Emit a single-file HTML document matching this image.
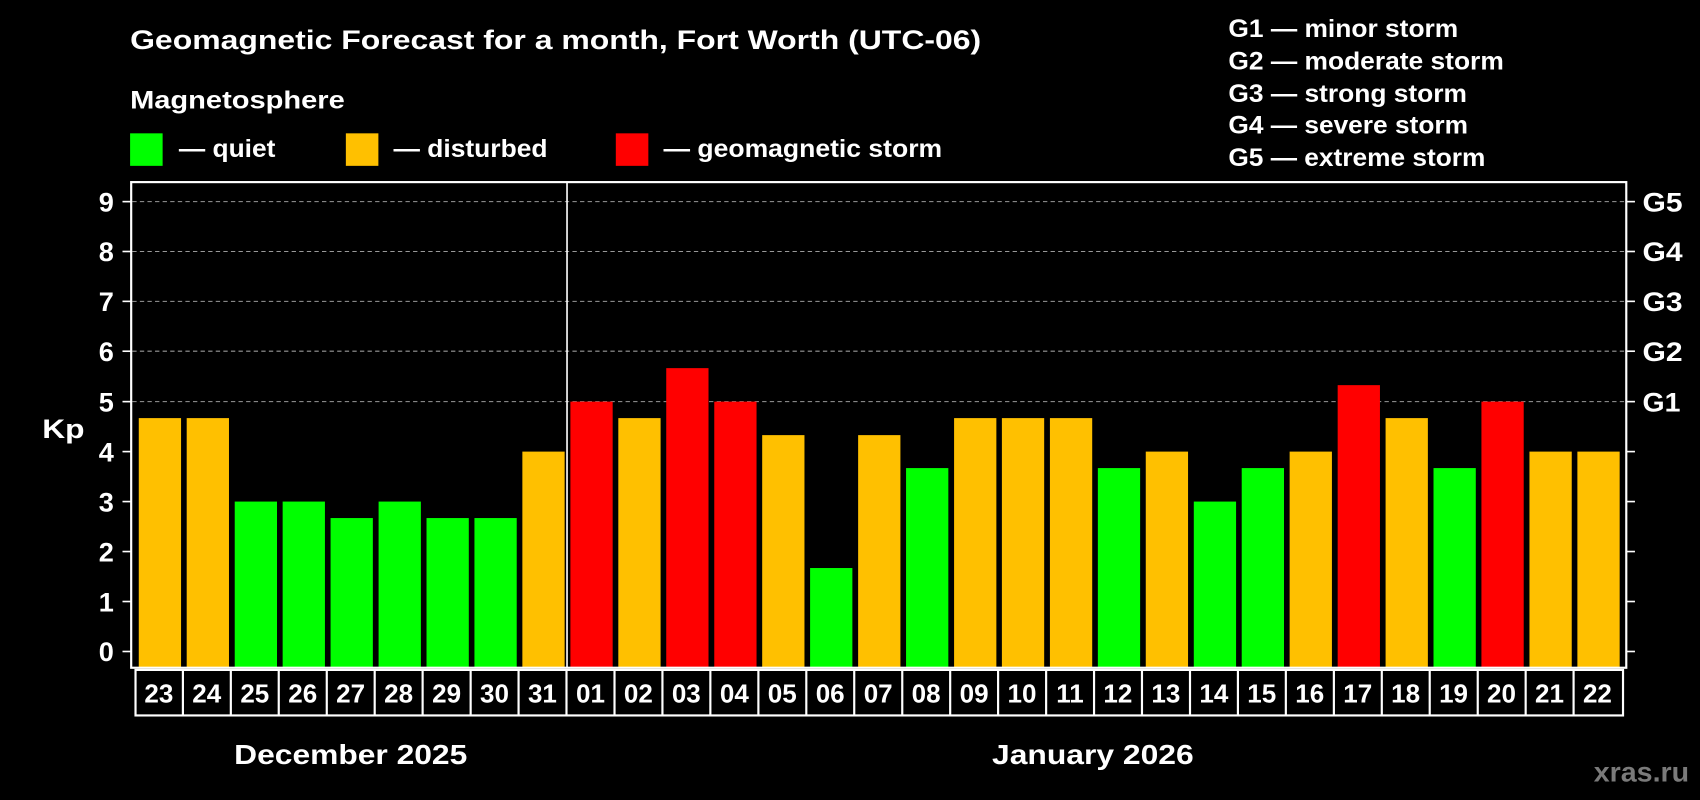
<!DOCTYPE html>
<html><head><meta charset="utf-8"><style>
html,body{margin:0;padding:0;background:#000;width:1700px;height:800px;overflow:hidden}
svg{display:block}
text{font-family:"Liberation Sans",Arial,sans-serif;font-weight:bold;fill:#fff}
</style></head><body>
<svg width="1700" height="800" viewBox="0 0 1568 738" preserveAspectRatio="none" xmlns="http://www.w3.org/2000/svg">
<rect width="1568" height="738" fill="#000"/>
<text x="120" y="45" font-size="25" textLength="785" lengthAdjust="spacingAndGlyphs">Geomagnetic Forecast for a month, Fort Worth (UTC-06)</text>
<text x="120" y="100" font-size="23" textLength="198" lengthAdjust="spacingAndGlyphs">Magnetosphere</text>
<rect x="120" y="123" width="30" height="30" fill="#00ff00"/>
<text x="165" y="145" font-size="23" textLength="89" lengthAdjust="spacingAndGlyphs">— quiet</text>
<rect x="319" y="123" width="30" height="30" fill="#ffc000"/>
<text x="363" y="145" font-size="23" textLength="142" lengthAdjust="spacingAndGlyphs">— disturbed</text>
<rect x="568" y="123" width="30" height="30" fill="#ff0000"/>
<text x="612" y="145" font-size="23" textLength="257" lengthAdjust="spacingAndGlyphs">— geomagnetic storm</text>
<g font-size="23">
<text x="1133" y="34" textLength="212" lengthAdjust="spacingAndGlyphs">G1 — minor storm</text>
<text x="1133" y="64" textLength="254" lengthAdjust="spacingAndGlyphs">G2 — moderate storm</text>
<text x="1133" y="94" textLength="220" lengthAdjust="spacingAndGlyphs">G3 — strong storm</text>
<text x="1133" y="123" textLength="221" lengthAdjust="spacingAndGlyphs">G4 — severe storm</text>
<text x="1133" y="153" textLength="237" lengthAdjust="spacingAndGlyphs">G5 — extreme storm</text>
</g>
<g stroke="#999" stroke-width="1" stroke-dasharray="4,3">
<line x1="122" x2="1500" y1="186" y2="186"/>
<line x1="122" x2="1500" y1="232" y2="232"/>
<line x1="122" x2="1500" y1="278" y2="278"/>
<line x1="122" x2="1500" y1="324" y2="324"/>
<line x1="122" x2="1500" y1="370.5" y2="370.5"/>
</g>
<g>
<rect x="128.0" y="385.7" width="39" height="230.3" fill="#ffc000"/>
<rect x="172.2" y="385.7" width="39" height="230.3" fill="#ffc000"/>
<rect x="216.5" y="462.7" width="39" height="153.3" fill="#00ff00"/>
<rect x="260.7" y="462.7" width="39" height="153.3" fill="#00ff00"/>
<rect x="304.9" y="477.9" width="39" height="138.1" fill="#00ff00"/>
<rect x="349.2" y="462.7" width="39" height="153.3" fill="#00ff00"/>
<rect x="393.4" y="477.9" width="39" height="138.1" fill="#00ff00"/>
<rect x="437.6" y="477.9" width="39" height="138.1" fill="#00ff00"/>
<rect x="481.8" y="416.6" width="39" height="199.4" fill="#ffc000"/>
<rect x="526.1" y="370.5" width="39" height="245.5" fill="#ff0000"/>
<rect x="570.3" y="385.7" width="39" height="230.3" fill="#ffc000"/>
<rect x="614.5" y="339.6" width="39" height="276.4" fill="#ff0000"/>
<rect x="658.8" y="370.5" width="39" height="245.5" fill="#ff0000"/>
<rect x="703.0" y="401.4" width="39" height="214.6" fill="#ffc000"/>
<rect x="747.2" y="524.0" width="39" height="92.0" fill="#00ff00"/>
<rect x="791.5" y="401.4" width="39" height="214.6" fill="#ffc000"/>
<rect x="835.7" y="431.8" width="39" height="184.2" fill="#00ff00"/>
<rect x="880.0" y="385.7" width="39" height="230.3" fill="#ffc000"/>
<rect x="924.1" y="385.7" width="39" height="230.3" fill="#ffc000"/>
<rect x="968.4" y="385.7" width="39" height="230.3" fill="#ffc000"/>
<rect x="1012.6" y="431.8" width="39" height="184.2" fill="#00ff00"/>
<rect x="1056.8" y="416.6" width="39" height="199.4" fill="#ffc000"/>
<rect x="1101.1" y="462.7" width="39" height="153.3" fill="#00ff00"/>
<rect x="1145.3" y="431.8" width="39" height="184.2" fill="#00ff00"/>
<rect x="1189.5" y="416.6" width="39" height="199.4" fill="#ffc000"/>
<rect x="1233.8" y="355.3" width="39" height="260.7" fill="#ff0000"/>
<rect x="1278.0" y="385.7" width="39" height="230.3" fill="#ffc000"/>
<rect x="1322.2" y="431.8" width="39" height="184.2" fill="#00ff00"/>
<rect x="1366.4" y="370.5" width="39" height="245.5" fill="#ff0000"/>
<rect x="1410.7" y="416.6" width="39" height="199.4" fill="#ffc000"/>
<rect x="1454.9" y="416.6" width="39" height="199.4" fill="#ffc000"/>
</g>
<rect x="121" y="168" width="1379" height="448" fill="none" stroke="#fff" stroke-width="2"/>
<line x1="523" x2="523" y1="168" y2="616" stroke="#fff" stroke-width="1.5"/>
<g stroke="#fff" stroke-width="1.5">
<line x1="113" x2="121" y1="186" y2="186"/><line x1="113" x2="121" y1="232" y2="232"/><line x1="113" x2="121" y1="278" y2="278"/><line x1="113" x2="121" y1="324" y2="324"/><line x1="113" x2="121" y1="370.5" y2="370.5"/><line x1="113" x2="121" y1="416.6" y2="416.6"/><line x1="113" x2="121" y1="462.7" y2="462.7"/><line x1="113" x2="121" y1="508.8" y2="508.8"/><line x1="113" x2="121" y1="554.9" y2="554.9"/><line x1="113" x2="121" y1="601" y2="601"/>
<line x1="1500" x2="1508" y1="186" y2="186"/><line x1="1500" x2="1508" y1="232" y2="232"/><line x1="1500" x2="1508" y1="278" y2="278"/><line x1="1500" x2="1508" y1="324" y2="324"/><line x1="1500" x2="1508" y1="370.5" y2="370.5"/><line x1="1500" x2="1508" y1="416.6" y2="416.6"/><line x1="1500" x2="1508" y1="462.7" y2="462.7"/><line x1="1500" x2="1508" y1="508.8" y2="508.8"/><line x1="1500" x2="1508" y1="554.9" y2="554.9"/><line x1="1500" x2="1508" y1="601" y2="601"/>
</g>
<g font-size="25" text-anchor="end">
<text x="105" y="195">9</text><text x="105" y="241">8</text><text x="105" y="287">7</text><text x="105" y="333">6</text><text x="105" y="379.5">5</text><text x="105" y="425.6">4</text><text x="105" y="471.7">3</text><text x="105" y="517.8">2</text><text x="105" y="563.9">1</text><text x="105" y="610">0</text>
</g>
<text x="39" y="404" font-size="25" textLength="39" lengthAdjust="spacingAndGlyphs">Kp</text>
<g font-size="25">
<text x="1515" y="195" textLength="37" lengthAdjust="spacingAndGlyphs">G5</text><text x="1515" y="241" textLength="37" lengthAdjust="spacingAndGlyphs">G4</text><text x="1515" y="287" textLength="37" lengthAdjust="spacingAndGlyphs">G3</text><text x="1515" y="333" textLength="37" lengthAdjust="spacingAndGlyphs">G2</text><text x="1515" y="379.5" textLength="35" lengthAdjust="spacingAndGlyphs">G1</text>
</g>
<g stroke="#fff" stroke-width="2" fill="none">
<rect x="125" y="618" width="1372" height="42"/>
<path d="M168.7 618V660M212.9 618V660M257.1 618V660M301.4 618V660M345.6 618V660M389.8 618V660M434.1 618V660M478.3 618V660M522.5 618V660M566.8 618V660M611 618V660M655.2 618V660M699.5 618V660M743.7 618V660M787.9 618V660M832.2 618V660M876.4 618V660M920.6 618V660M964.9 618V660M1009.1 618V660M1053.3 618V660M1097.6 618V660M1141.8 618V660M1186 618V660M1230.3 618V660M1274.5 618V660M1318.7 618V660M1363 618V660M1407.2 618V660M1451.4 618V660"/>
</g>
<g font-size="24" text-anchor="middle">
<text x="146.5" y="648">23</text><text x="190.7" y="648">24</text><text x="235" y="648">25</text><text x="279.2" y="648">26</text><text x="323.4" y="648">27</text><text x="367.7" y="648">28</text><text x="411.9" y="648">29</text><text x="456.1" y="648">30</text><text x="500.3" y="648">31</text><text x="544.6" y="648">01</text><text x="588.8" y="648">02</text><text x="633" y="648">03</text><text x="677.3" y="648">04</text><text x="721.5" y="648">05</text><text x="765.7" y="648">06</text><text x="810" y="648">07</text><text x="854.2" y="648">08</text><text x="898.5" y="648">09</text><text x="942.6" y="648">10</text><text x="986.9" y="648">11</text><text x="1031.1" y="648">12</text><text x="1075.3" y="648">13</text><text x="1119.6" y="648">14</text><text x="1163.8" y="648">15</text><text x="1208" y="648">16</text><text x="1252.3" y="648">17</text><text x="1296.5" y="648">18</text><text x="1340.7" y="648">19</text><text x="1384.9" y="648">20</text><text x="1429.2" y="648">21</text><text x="1473.4" y="648">22</text>
</g>
<text x="216" y="705" font-size="26" textLength="215" lengthAdjust="spacingAndGlyphs">December 2025</text>
<text x="915" y="705" font-size="26" textLength="186" lengthAdjust="spacingAndGlyphs">January 2026</text>
<text x="1470" y="721" font-size="26" textLength="88" lengthAdjust="spacingAndGlyphs" style="fill:#7a7a7a">xras.ru</text>
</svg>
</body></html>
